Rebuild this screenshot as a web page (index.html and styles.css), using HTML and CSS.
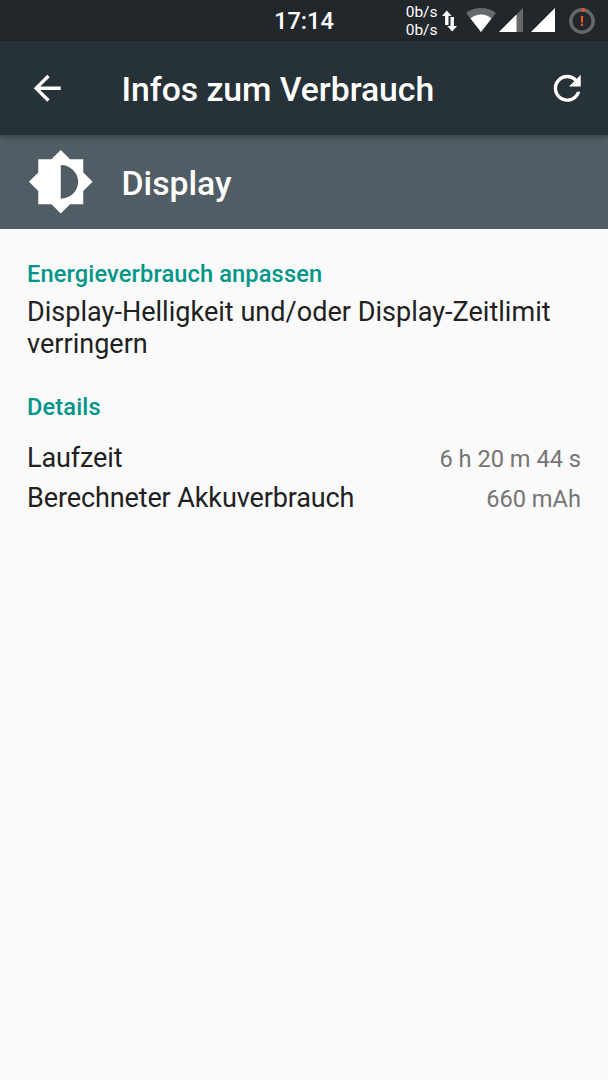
FILE: index.html
```html
<!DOCTYPE html>
<html lang="de">
<head>
  <meta charset="UTF-8">
  <meta name="viewport" content="width=device-width, initial-scale=1.0">
  <title>Infos zum Verbrauch</title>
  <link rel="stylesheet" href="styles.css">
</head>
<body>
  <div class="status-bar">
    <span class="clock">17:14</span>
    <div class="status-icons">
      <div class="speed">
        <span>0b/s</span>
        <span>0b/s</span>
      </div>
      <svg class="transfer" viewBox="0 0 15 22" width="15" height="22" fill="#fff">
        <path d="M4.8 0.5L9.6 6H6.5V15H3.1V6H0z"/>
        <path d="M10.2 21.5L5.4 16H8.5V7H11.9V16H15z"/>
      </svg>
      <svg class="wifi" viewBox="0 0 30 24" width="30" height="24">
        <path fill="#66696b" d="M0 5C8 -1.6 22 -1.6 30 5L15 24z"/>
        <path fill="#fff" d="M4.5 10.5C10.5 5.3 19.5 5.3 25.5 10.5L15 24z"/>
      </svg>
      <svg class="signal" viewBox="0 0 24 24" width="24" height="24">
        <path fill="#66696b" d="M24 0V24H0z"/>
        <path fill="#fff" d="M17.5 6.5V24H0z"/>
      </svg>
      <svg class="signal-full" viewBox="0 0 24 24" width="24" height="24">
        <path fill="#fff" d="M24 0V24H0z"/>
      </svg>
      <svg class="battery" viewBox="0 0 26 26" width="26" height="26">
        <circle cx="13" cy="13" r="11.2" fill="none" stroke="#66696b" stroke-width="3.4"/>
        <path fill="#f4511e" d="M12.7 0.2H15.7V3.8H12.7zM11.8 8H14.2L13.9 14.8H12.1zM11.9 15.8H14.1V18H11.9z"/>
      </svg>
    </div>
  </div>

  <header class="toolbar">
    <svg class="icon" viewBox="0 0 24 24" fill="#fff">
      <path d="M20 11H7.83l5.59-5.59L12 4l-8 8 8 8 1.41-1.41L7.83 13H20v-2z"/>
    </svg>
    <h1>Infos zum Verbrauch</h1>
    <svg class="icon" viewBox="0 0 24 24" fill="#fff">
      <path d="M17.65 6.35C16.2 4.9 14.21 4 12 4c-4.42 0-7.99 3.58-7.99 8s3.57 8 7.99 8c3.73 0 6.84-2.55 7.73-6h-2.08c-.82 2.33-3.04 4-5.65 4-3.31 0-6-2.69-6-6s2.69-6 6-6c1.66 0 3.14.69 4.22 1.78L13 11h7V4l-2.35 2.35z"/>
    </svg>
  </header>

  <div class="app-header">
    <svg class="app-icon" viewBox="0 0 24 24" fill="#fff">
      <path d="M20 15.31L23.31 12 20 8.69V4h-4.69L12 .69 8.69 4H4v4.69L.69 12 4 15.31V20h4.69L12 23.31 15.31 20H20v-4.69zM12 18V6c3.4 0 6.2 2.69 6.2 6s-2.8 6-6.2 6z"/>
    </svg>
    <h2>Display</h2>
  </div>

  <main class="content">
    <h3>Energieverbrauch anpassen</h3>
    <p class="hint">Display-Helligkeit und/oder Display-Zeitlimit verringern</p>
    <h3>Details</h3>
    <div class="details">
      <div class="row">
        <span class="label">Laufzeit</span>
        <span class="value">6 h 20 m 44 s</span>
      </div>
      <div class="row">
        <span class="label">Berechneter Akkuverbrauch</span>
        <span class="value">660 mAh</span>
      </div>
    </div>
  </main>
</body>
</html>
```

FILE: styles.css
```css
* {
  box-sizing: border-box;
}
body {
  margin: 0;
  min-height: 100vh;
  font-family: Roboto, sans-serif;
  color: #212121;
  background-color: #fafafa;
}
h1, h2, h3, p {
  margin: 0;
}
h1, h2, h3 {
  font-weight: 500;
}
svg {
  display: block;
  flex-shrink: 0;
}

/* status bar */
.status-bar {
  display: grid;
  grid-template-columns: 1fr auto 1fr;
  align-items: center;
  height: 40.5px;
  color: #fff;
  background-color: #21272b;
}
.clock {
  grid-column: 2;
  padding-top: 2px;
  font-size: 23.64px;
  font-weight: 500;
}
.status-icons {
  display: flex;
  justify-content: flex-end;
  align-items: center;
  padding-right: 13.5px;
}
.speed {
  display: flex;
  flex-direction: column;
  padding-top: 2px;
  font-size: 15.5px;
  line-height: 18px;
  margin-right: 4px;
}
.transfer {
  margin: 1px 9px 0 0;
}
.wifi {
  margin-right: 3px;
}
.signal {
  margin-right: 8px;
}
.signal-full {
  margin-right: 14px;
}
.battery {
  margin-top: 1px;
}

/* toolbar */
.toolbar {
  position: relative;
  display: flex;
  align-items: center;
  height: 94.5px;
  padding: 0 20.3px 0 27px;
  color: #fff;
  background-color: #263238;
  box-shadow: 0 2px 6px rgba(0, 0, 0, 0.3);
}
.toolbar h1 {
  flex: 1;
  margin-left: 54px;
  padding-top: 3px;
  font-size: 33.78px;
  letter-spacing: -0.05px;
}
.icon {
  width: 40.5px;
  height: 40.5px;
}

.app-header {
  display: flex;
  align-items: center;
  height: 94.4px;
  padding-left: 27px;
  color: #fff;
  background-color: #505d64;
}
.app-icon {
  width: 67.5px;
  height: 67.5px;
}
.app-header h2 {
  margin-left: 27px;
  padding-top: 3px;
  font-size: 33.78px;
}

/* content */
.content {
  padding: 31px 27px;
}
.content h3 {
  font-size: 23.64px;
  letter-spacing: 0.12px;
  color: #009688;
}
.hint {
  margin: 8px 0 33px;
  font-size: 27.02px;
  letter-spacing: 0.02px;
}
.details {
  display: flex;
  flex-direction: column;
  gap: 8px;
  margin-top: 21px;
}
.row {
  display: flex;
  justify-content: space-between;
  align-items: baseline;
}
.label {
  font-size: 27.02px;
  letter-spacing: -0.12px;
}
.value {
  font-size: 23.64px;
  color: #757575;
}
```
